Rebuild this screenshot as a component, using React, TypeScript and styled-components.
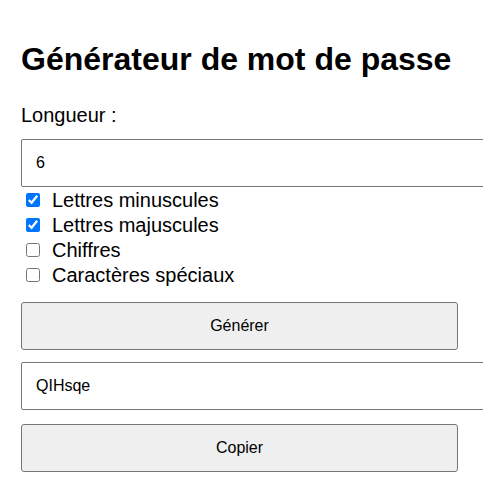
import React, { useState } from "react";
import styled, { createGlobalStyle } from "styled-components";

const GlobalStyle = createGlobalStyle`
  html, body {
    margin: 0;
    padding: 0;
    overflow: hidden;
    background: #ffffff;
  }
  body {
    font-family: "Liberation Sans", Arial, sans-serif;
    color: #000000;
  }
`;

const options = [
  { id: "lower", label: "Lettres minuscules", checked: true },
  { id: "upper", label: "Lettres majuscules", checked: true },
  { id: "digits", label: "Chiffres", checked: false },
  { id: "special", label: "Caractères spéciaux", checked: false },
];

export default function App() {
  const [length, setLength] = useState("6");
  const [checks, setChecks] = useState(options.map((o) => o.checked));

  return (
    <>
      <GlobalStyle />
      <Container>
        <Title>Générateur de mot de passe</Title>
        <FieldLabel htmlFor="length">Longueur :</FieldLabel>
        <TextInput
          id="length"
          type="text"
          value={length}
          onChange={(e) => setLength(e.target.value)}
        />
        <Options>
          {options.map((o, i) => (
            <OptionRow key={o.id}>
              <Check
                type="checkbox"
                checked={checks[i]}
                onChange={() =>
                  setChecks(checks.map((c, j) => (j === i ? !c : c)))
                }
              />
              {o.label}
            </OptionRow>
          ))}
        </Options>
        <Button $top={15}>Générer</Button>
        <TextInput type="text" value="QIHsqe" readOnly $top={12} />
        <Button $top={14}>Copier</Button>
      </Container>
    </>
  );
}

const Container = styled.div`
  width: 437px;
  padding: 20px 21px;
`;

const Title = styled.h1`
  font-size: 32px;
  font-weight: 700;
  margin: 21px 0 26px 0;
`;

const FieldLabel = styled.label`
  display: block;
  font-size: 20px;
  line-height: 23px;
  margin-bottom: 12px;
`;

const TextInput = styled.input<{ $top?: number }>`
  display: block;
  box-sizing: content-box;
  width: 100%;
  height: 18px;
  margin: ${(p) => p.$top ?? 0}px 0 0 0;
  padding: 14px;
  border: 1px solid #767676;
  border-radius: 2px;
  font-family: "Liberation Sans", Arial, sans-serif;
  font-size: 16px;
  color: #000000;
  background: #ffffff;
  outline: none;
`;

const Options = styled.div`
  display: flex;
  flex-direction: column;
`;

const OptionRow = styled.label`
  display: flex;
  align-items: center;
  gap: 12px;
  box-sizing: border-box;
  height: 25px;
  padding-top: 1px;
  font-size: 20px;
`;

const Check = styled.input`
  width: 14px;
  height: 14px;
  margin: 0 0 0 5px;
  accent-color: #0075ff;
`;

const Button = styled.button<{ $top: number }>`
  display: block;
  width: 100%;
  height: 48px;
  margin-top: ${(p) => p.$top}px;
  border: 1px solid #767676;
  border-radius: 3px;
  background: #efefef;
  font-family: "Liberation Sans", Arial, sans-serif;
  font-size: 16px;
  color: #000000;
`;
